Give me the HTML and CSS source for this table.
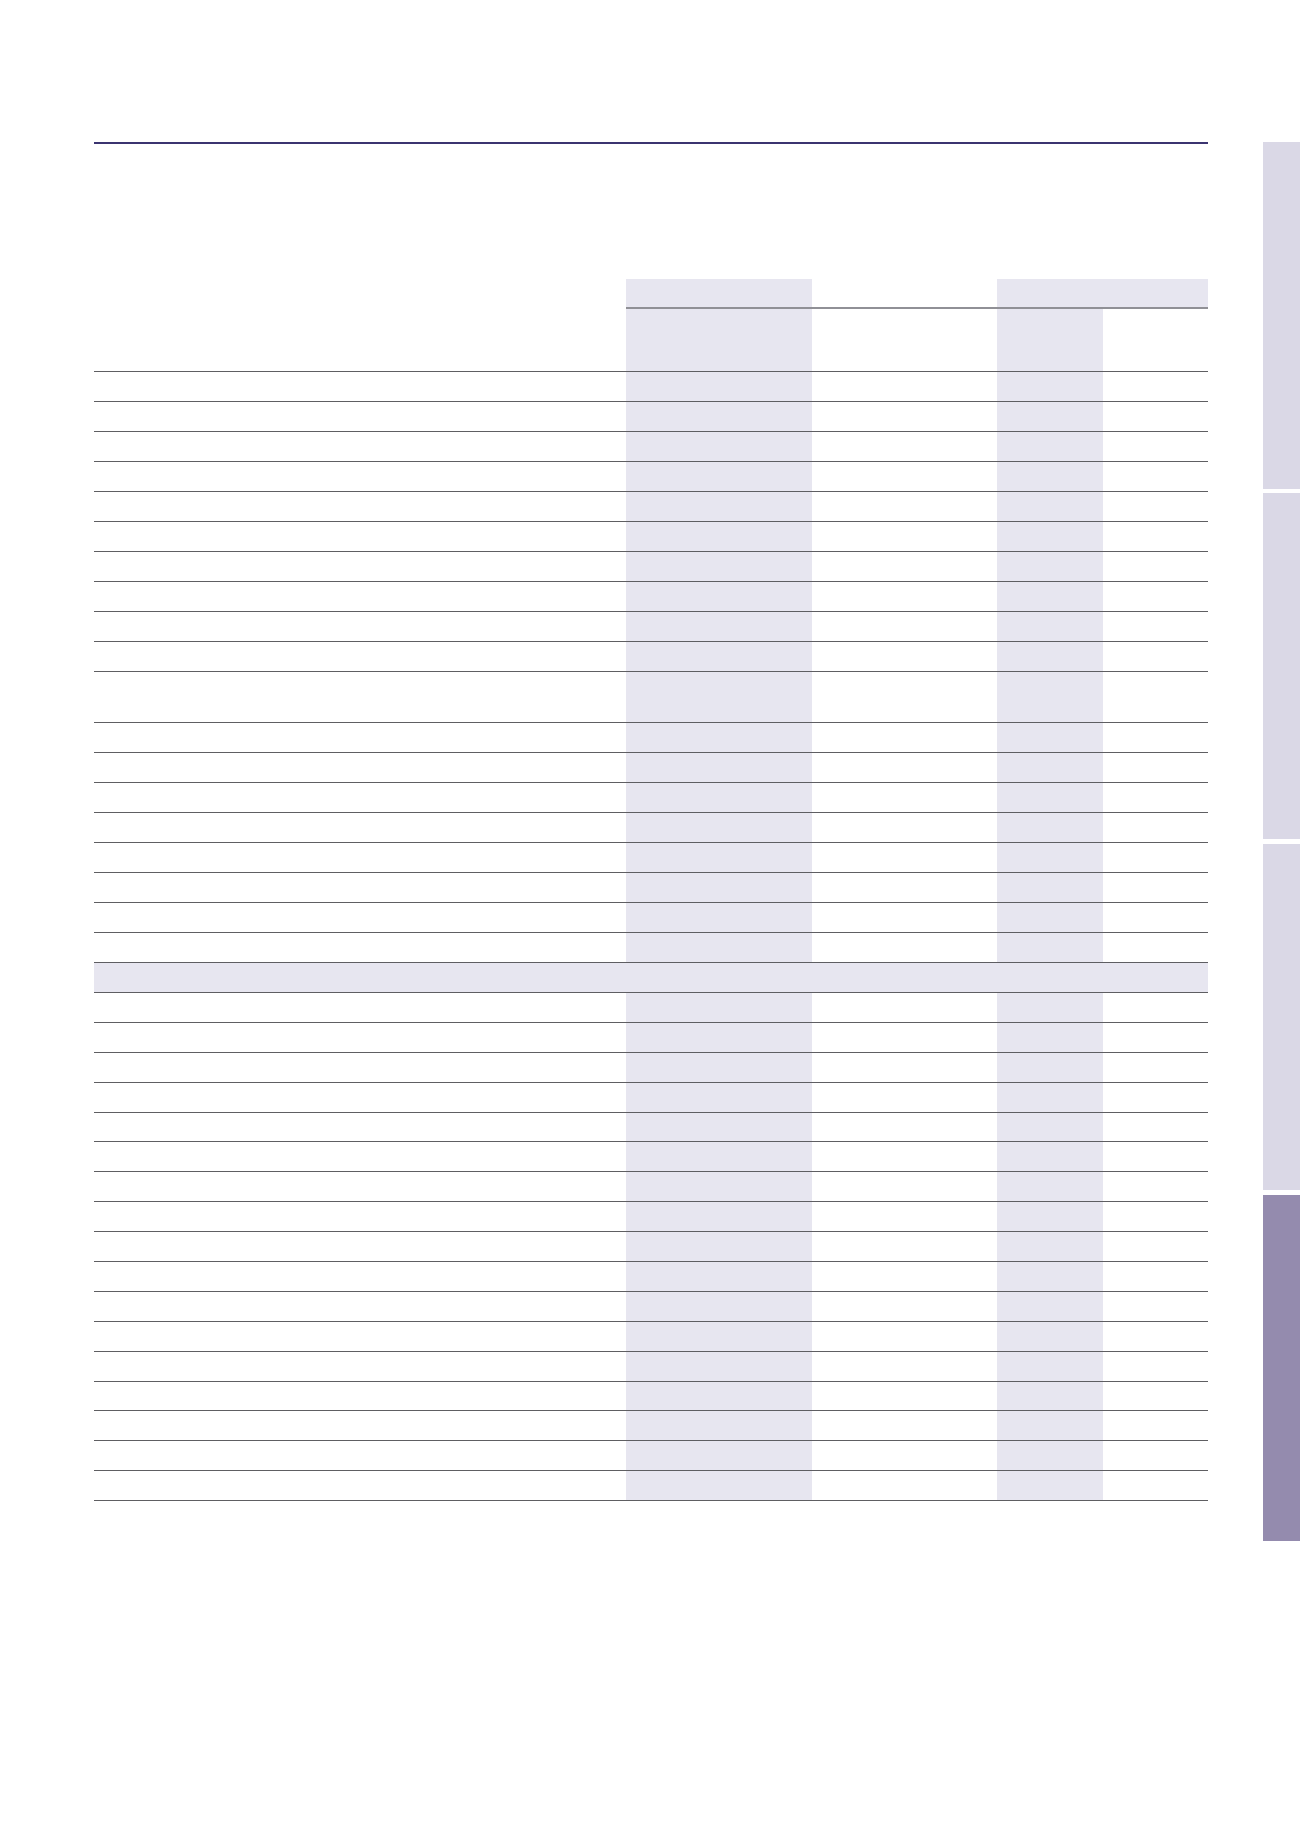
FILE: index.html
```html
<!DOCTYPE html>
<html lang="en">
<head>
<meta charset="utf-8">
<title>Table</title>
<link rel="stylesheet" href="styles.css">
</head>
<body>
<div class="page">
  <main class="main">
    <div class="rule"></div>
    <div class="table">
      <div class="row head1">
        <div class="c"></div><div class="c"></div><div class="c"></div>
        <div class="c ln sh span2"></div>
        <div class="c ln span2"></div>
        <div class="c ln sh span2"></div>
      </div>
      <div class="row head2 bd">
        <div class="c"></div><div class="c"></div><div class="c"></div>
        <div class="c sh"></div><div class="c sh"></div>
        <div class="c"></div><div class="c"></div>
        <div class="c sh"></div><div class="c"></div>
      </div>
      <div id="sec1"></div>
      <div class="row tall bd">
        <div class="c"></div><div class="c"></div><div class="c"></div>
        <div class="c sh"></div><div class="c sh"></div>
        <div class="c"></div><div class="c"></div>
        <div class="c sh"></div><div class="c"></div>
      </div>
      <div id="sec2"></div>
      <div class="row bd full"></div>
      <div id="sec3"></div>
    </div>
  </main>
  <aside class="side">
    <div class="tab"></div>
    <div class="tab"></div>
    <div class="tab"></div>
    <div class="tab on"></div>
  </aside>
</div>
<script src="script.js"></script>
</body>
</html>
```

FILE: script.js
```js
function rows(id, n, cls) {
  var host = document.getElementById(id);
  var html = '';
  for (var i = 0; i < n; i++) {
    html += '<div class="row bd ' + cls + '">' +
      '<div class="c"></div><div class="c"></div><div class="c"></div>' +
      '<div class="c sh"></div><div class="c sh"></div>' +
      '<div class="c"></div><div class="c"></div>' +
      '<div class="c sh"></div><div class="c"></div></div>';
  }
  host.outerHTML = html;
}
rows('sec1', 10, 'std');
rows('sec2', 8, 'std');
rows('sec3', 17, 'std2');
```

FILE: styles.css
```css
html, body {
  margin: 0;
  padding: 0;
  background: #ffffff;
  font-family: "Liberation Sans", Arial, sans-serif;
}
.page {
  display: flex;
  align-items: flex-start;
  min-height: 1839px;
}
.main {
  margin-left: 94px;
  width: 1114px;
  padding-top: 142px;
}
.rule {
  height: 2px;
  background: #3b3470;
}
.table {
  margin-top: 135px;
}
.row {
  display: grid;
  grid-template-columns: 358px 13px 161px 92px 94px 92px 93px 106px 105px;
  box-sizing: border-box;
}
.bd {
  border-bottom: 1px solid #5e5e62;
}
.head1 {
  height: 30px;
}
.head1 .ln {
  border-bottom: 2px solid #909096;
}
.span2 {
  grid-column: span 2;
}
.head2 {
  height: 63px;
}
.std {
  height: 30px;
}
.std2 {
  height: 29.9px;
}
.tall {
  height: 51px;
}
.full {
  height: 30px;
  background: #e7e6f0;
}
.sh {
  background: #e7e6f0;
}
.side {
  margin-left: 55px;
  width: 37px;
  padding-top: 142px;
  display: flex;
  flex-direction: column;
  gap: 4.4px;
}
.tab {
  height: 346.5px;
  background: #dad8e6;
}
.tab.on {
  background: #948bae;
}
```
